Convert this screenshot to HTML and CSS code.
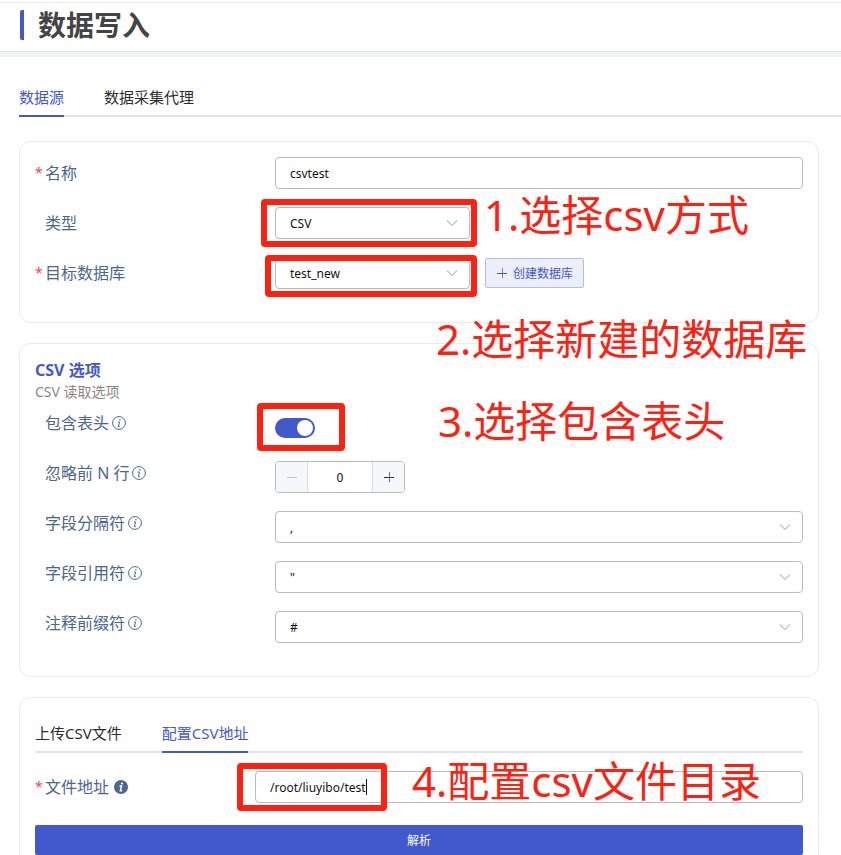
FILE: index.html
```html
<!DOCTYPE html>
<html lang="zh-CN">
<head>
<meta charset="utf-8">
<meta name="viewport" content="width=device-width, initial-scale=1">
<title>数据写入</title>
<link rel="stylesheet" href="styles.css">
</head>
<body>
<svg class="defs" aria-hidden="true">
  <symbol id="chevron" viewBox="0 0 12 12"><path d="M1 3.5 6 8.5 11 3.5" fill="none" stroke="currentColor" stroke-width="1.2"/></symbol>
  <symbol id="info" viewBox="0 0 14 14"><circle cx="7" cy="7" r="6.4" fill="none" stroke="currentColor" stroke-width="1"/><circle cx="7.9" cy="3.7" r=".8" fill="currentColor"/><path d="M6 6h1.5L6.4 10.6h1.4" fill="none" stroke="currentColor" stroke-width="1"/></symbol>
  <symbol id="info-filled" viewBox="0 0 14 14"><circle cx="7" cy="7" r="7" fill="currentColor"/><circle cx="8" cy="3.5" r="1.1" fill="#fff"/><path d="M5.5 6h2L6.4 10.7h1.7" fill="none" stroke="#fff" stroke-width="1.5"/></symbol>
  <symbol id="plus" viewBox="0 0 12 12"><path d="M1 6.5h10" fill="none" stroke="currentColor" stroke-width="1"/><path d="M6.5 1v10" fill="none" stroke="currentColor" stroke-width="1" opacity=".7"/></symbol>
  <symbol id="minus" viewBox="0 0 12 12"><path d="M1 6.5h10" fill="none" stroke="currentColor" stroke-width="1"/></symbol>
</svg>
<header class="page-header">
  <h1>数据写入</h1>
</header>
<main>
  <nav class="tabs">
    <a class="tab active" href="#source">数据源</a>
    <a class="tab" href="#agent">数据采集代理</a>
  </nav>

  <form class="cards">
    <section class="card">
      <div class="row">
        <label class="label required" for="name">名称</label>
        <div class="field"><input class="box" id="name" type="text" value="csvtest"></div>
      </div>
      <div class="row">
        <label class="label" for="type">类型</label>
        <div class="field">
          <div class="select short">
            <select class="box" id="type"><option>CSV</option></select>
            <svg><use href="#chevron"/></svg>
          </div>
          <span class="mark mark-type"></span>
          <span class="note note-type">1.选择csv方式</span>
        </div>
      </div>
      <div class="row">
        <label class="label required" for="db">目标数据库</label>
        <div class="field">
          <div class="select short">
            <select class="box" id="db"><option>test_new</option></select>
            <svg><use href="#chevron"/></svg>
          </div>
          <button class="create" type="button"><svg><use href="#plus"/></svg>创建数据库</button>
          <span class="mark mark-db"></span>
          <span class="note note-db">2.选择新建的数据库</span>
        </div>
      </div>
    </section>

    <section class="card options">
      <h2>CSV 选项</h2>
      <p class="hint">CSV 读取选项</p>
      <div class="row">
        <label class="label" for="header">包含表头<svg><use href="#info"/></svg></label>
        <div class="field">
          <input class="switch" id="header" type="checkbox" role="switch" checked>
          <span class="mark mark-header"></span>
          <span class="note note-header">3.选择包含表头</span>
        </div>
      </div>
      <div class="row">
        <label class="label" for="skip">忽略前 N 行<svg><use href="#info"/></svg></label>
        <div class="field">
          <div class="stepper">
            <button type="button" aria-label="减少" disabled><svg><use href="#minus"/></svg></button>
            <input id="skip" type="text" inputmode="numeric" value="0">
            <button type="button" aria-label="增加"><svg><use href="#plus"/></svg></button>
          </div>
        </div>
      </div>
      <div class="row">
        <label class="label" for="sep">字段分隔符<svg><use href="#info"/></svg></label>
        <div class="field"><div class="select"><select class="box" id="sep"><option>,</option></select><svg><use href="#chevron"/></svg></div></div>
      </div>
      <div class="row">
        <label class="label" for="quote">字段引用符<svg><use href="#info"/></svg></label>
        <div class="field"><div class="select"><select class="box" id="quote"><option>"</option></select><svg><use href="#chevron"/></svg></div></div>
      </div>
      <div class="row">
        <label class="label" for="comment">注释前缀符<svg><use href="#info"/></svg></label>
        <div class="field"><div class="select"><select class="box" id="comment"><option>#</option></select><svg><use href="#chevron"/></svg></div></div>
      </div>
    </section>

    <section class="card upload">
      <nav class="tabs">
        <a class="tab" href="#upload">上传CSV文件</a>
        <a class="tab active" href="#path">配置CSV地址</a>
      </nav>
      <div class="row">
        <label class="label required" for="path">文件地址<svg class="filled"><use href="#info-filled"/></svg></label>
        <div class="field">
          <input class="box" id="path" type="text" value="/root/liuyibo/test">
          <span class="caret"></span>
          <span class="mark mark-path"></span>
          <span class="note note-path">4.配置csv文件目录</span>
        </div>
      </div>
      <button class="submit" type="button">解析</button>
    </section>
  </form>
</main>
</body>
</html>
```

FILE: styles.css
```css
* { box-sizing: border-box; }

:root {
  --blue: #4259ce;
  --label: #4a6691;
  --red: #ff2010;
}

body {
  margin: 0;
  background: #fff;
  color: #2c2d30;
  font-family: "Noto Sans", "Noto Sans CJK SC", sans-serif;
  font-size: 16px;
}

button, input, select { font: inherit; margin: 0; }
a { color: inherit; text-decoration: none; }
svg { width: 12px; height: 12px; flex: none; }
.defs { display: none; }

.page-header {
  margin-top: 2px;
  padding: 7px 20px 12px;
  border-top: 1px solid #ebebeb;
  border-bottom: 5px solid #f2f3f3;
  box-shadow: inset 0 -1px #dedede;
}

h1 {
  margin: 0;
  padding-left: 14px;
  border-left: 4px solid var(--blue);
  border-radius: 2px;
  color: #444;
  font-size: 28px;
  line-height: 30px;
  font-weight: 700;
}

main { padding: 20px 0 0 19px; }

.tabs {
  display: flex;
  gap: 40px;
  height: 40px;
  box-shadow: inset 0 -2px #dfe3f0;
  font-size: 15px;
  line-height: 40px;
}

.tab.active {
  color: var(--blue);
  box-shadow: inset 0 -2px var(--blue);
}

.cards {
  display: flex;
  flex-direction: column;
  gap: 20px;
  margin: 24px 22px 0 0;
}

.card {
  padding: 15px;
  border: 1px solid #ebebeb;
  border-radius: 12px;
}

.row {
  display: grid;
  grid-template-columns: 240px minmax(0, 1fr);
  align-items: start;
  height: 50px;
}

.label {
  display: flex;
  align-items: center;
  gap: 3px;
  height: 30px;
  padding-left: 10px;
  position: relative;
  color: var(--label);
}

.label svg { width: 14px; height: 14px; margin-top: 2px; }
.label .filled { margin-left: 2px; }

.required::before {
  content: "*";
  position: absolute;
  left: 0;
  color: #f5484b;
  font-size: 14px;
}

.field {
  display: flex;
  gap: 15px;
  position: relative;
}

.box {
  appearance: none;
  display: block;
  width: 100%;
  height: 32px;
  padding: 0 14px;
  border: 1px solid #b8babd;
  border-radius: 4px;
  background: #fff;
  color: #111;
  font-size: 12px;
}

.select { position: relative; flex: 1; }
.short { flex: 0 0 195px; }

.select svg {
  position: absolute;
  right: 12px;
  top: 10px;
  color: #c0c4cc;
  pointer-events: none;
}

.create {
  display: flex;
  align-items: center;
  gap: 5px;
  height: 30px;
  margin-top: 1px;
  padding: 0 10px;
  border: 1px solid #b3bdeb;
  border-radius: 2px;
  background: #eceefa;
  color: var(--blue);
  font-size: 12px;
}

h2, .hint { margin: 0; line-height: 22px; }
h2 { color: var(--blue); font-size: 16px; font-weight: 700; }
.hint { margin-bottom: 4px; color: #8b8583; font-size: 14px; }

.options { padding-bottom: 19px; }
.options .field { margin-top: 4px; }

.switch {
  appearance: none;
  display: flex;
  justify-content: flex-end;
  width: 40px;
  height: 20px;
  margin-top: 7px;
  padding: 2px;
  border-radius: 10px;
  background: var(--blue);
}

.switch::before {
  content: "";
  width: 16px;
  height: 16px;
  border-radius: 50%;
  background: #fff;
}

.stepper {
  display: flex;
  width: 130px;
  height: 32px;
  border: 1px solid #b8babd;
  border-radius: 4px;
  overflow: hidden;
}

.stepper button {
  display: flex;
  align-items: center;
  justify-content: center;
  width: 31px;
  padding: 0;
  border: 0;
  background: #f5f7fa;
  color: #333;
}

.stepper button:disabled { color: #c0c4cc; }

.stepper input {
  flex: 1;
  min-width: 0;
  padding: 0;
  border: solid #d9dbe0;
  border-width: 0 1px;
  color: #111;
  font-size: 12px;
  text-align: center;
}

.upload {
  padding-bottom: 0;
  border-bottom: 0;
  border-radius: 12px 12px 0 0;
}

.upload .row {
  grid-template-columns: 220px minmax(0, 1fr);
  height: 54px;
  margin-top: 18px;
}

.submit {
  display: block;
  width: 100%;
  height: 30px;
  border: 0;
  border-radius: 2px;
  background: var(--blue);
  color: #fff;
  font-size: 12px;
}

.caret {
  position: absolute;
  left: 111px;
  top: 8px;
  width: 1px;
  height: 16px;
  background: #111;
}

/* Walkthrough annotations laid over the form */
.mark, .note { position: absolute; z-index: 1; pointer-events: none; }

.mark {
  border: 6px solid var(--red);
  border-radius: 4px;
}

.note {
  color: var(--red);
  font-size: 42px;
  line-height: 48px;
  white-space: nowrap;
}

.mark-type { left: -14px; top: -8px; width: 216px; height: 48px; }
.mark-db { left: -10px; top: -2px; width: 212px; height: 42px; }
.mark-header { left: -18px; top: -8px; width: 88px; height: 48px; }
.mark-path { left: -18px; top: -8px; width: 150px; height: 48px; }

.note-type { left: 209px; top: -16px; }
.note-db { left: 161px; top: 58px; }
.note-header { left: 163px; top: -14px; }
.note-path { left: 157px; top: -14px; }
```
